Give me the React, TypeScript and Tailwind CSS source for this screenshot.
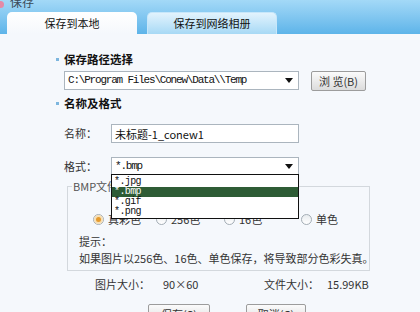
const cjk = "font-['Noto_Sans_CJK_SC','Noto_Sans',sans-serif]";
const mono = "font-['Liberation_Mono','Noto_Sans_CJK_SC',monospace] text-[11px] tracking-[-1.2px]";

function Arrow() {
  return (
    <svg width="8" height="5" viewBox="0 0 8 5" className="shrink-0">
      <path d="M0 0 L8 0 L4 5 Z" fill="#111" />
    </svg>
  );
}

function SectionTitle({ text }: { text: string }) {
  return (
    <div className="flex items-center h-[14px] -ml-[1px]">
      <span className="w-[3px] h-[3px] bg-[#7db6de] mr-[5px]" />
      <span className="font-bold text-[11.5px] leading-[14px] text-[#111]">{text}</span>
    </div>
  );
}

function Radio({ label, checked, width }: { label: string; checked?: boolean; width: string }) {
  return (
    <div className={`flex items-center gap-[4px] ${width}`}>
      <span className="w-[11px] h-[11px] rounded-full border border-[#a3adb5] bg-gradient-to-b from-[#e8ecef] to-white flex items-center justify-center">
        {checked && <span className="w-[5px] h-[5px] rounded-full bg-[#e59b2e] ring-2 ring-[#f7dfb5]" />}
      </span>
      <span className="text-[11px] leading-[14px] text-[#333]">{label}</span>
    </div>
  );
}

export default function App() {
  const formats = ["*.jpg", "*.bmp", "*.gif", "*.png"];
  return (
    <div className={`relative w-[420px] h-[312px] overflow-hidden bg-[#f5f8fc] text-[#222] ${cjk}`}>
      {/* header band with tabs */}
      <div className="h-[34px] bg-gradient-to-b from-[#a3d9f7] to-[#5db4e9]">
        <div className="h-[12px] flex items-end overflow-hidden">
          <span className="w-[4px] h-[7px] rounded-r-full bg-[#e58aa6] mb-[4px]" />
          <span className="ml-[6px] text-[12px] leading-[12px] text-[#3a4a58] -translate-y-[4px]">保存</span>
        </div>
        <div className="flex pl-[7px] gap-[10px]">
          <div className="w-[130px] h-[22px] rounded-t-[5px] bg-gradient-to-b from-white to-[#f5f8fc] flex items-center justify-center text-[11px] text-[#111]">
            保存到本地
          </div>
          <div className="w-[130px] h-[22px] rounded-t-[5px] bg-gradient-to-b from-[#e2f3fd] to-[#a7d9f5] border-t border-x border-[#c7e7fa] flex items-center justify-center text-[11px] text-[#111]">
            保存到网络相册
          </div>
        </div>
      </div>

      <div className="pl-[57px]">
        <div className="mt-[18px]">
          <SectionTitle text="保存路径选择" />
        </div>
        <div className="flex items-start gap-[12px] mt-[5px] pl-[7px]">
          <div className="w-[235px] h-[19px] bg-white border border-[#abb5be] flex items-center pl-[3px] pr-[5px]">
            <span className={`flex-1 ${mono} text-[#111]`}>C:\Program Files\Conew\Data\\Temp</span>
            <Arrow />
          </div>
          <button className="w-[55px] h-[20px] rounded-[2px] border border-[#9c9c9c] bg-gradient-to-b from-[#fbfbfb] to-[#dcdcdc] text-[11px] leading-[18px] text-[#333]">
            浏 览(B)
          </button>
        </div>

        <div className="mt-[5px]">
          <SectionTitle text="名称及格式" />
        </div>

        <div className="flex items-center mt-[14px] pl-[7px]">
          <span className="w-[47px] text-[11px] text-[#333]">名称：</span>
          <div className="w-[188px] h-[19px] bg-white border border-[#abb5be] flex items-center pl-[3px]">
            <span className="text-[11px] leading-[14px] text-[#111]">未标题-1_conew1</span>
          </div>
        </div>

        <div className="flex items-center mt-[14px] pl-[7px]">
          <span className="w-[47px] text-[11px] text-[#333]">格式：</span>
          <div className="w-[188px] h-[18px] bg-white border border-[#abb5be] flex items-center pl-[3px] pr-[5px]">
            <span className={`flex-1 ${mono} text-[#111]`}>*.bmp</span>
            <Arrow />
          </div>
        </div>

        {/* BMP group box */}
        <div className="relative ml-[10px] mt-[11px] w-[303px] h-[85px] border border-[#d3d8dd] pl-[11px]">
          <span className="absolute -top-[8px] left-[4px] px-[1px] bg-[#f5f8fc] text-[11px] leading-[14px] text-[#555]">BMP文件格式</span>
          <div className="flex pt-[25px] pl-[14px]">
            <Radio label="真彩色" checked width="w-[63px]" />
            <Radio label="256色" width="w-[68px]" />
            <Radio label="16色" width="w-[77px]" />
            <Radio label="单色" width="w-[50px]" />
          </div>
          <div className="mt-[8px] text-[11px] leading-[14px] text-[#333]">提示：</div>
          <div className="mt-[3px] text-[11px] leading-[14px] text-[#333] whitespace-nowrap">
            如果图片以256色、16色、单色保存，将导致部分色彩失真。
          </div>
        </div>

        <div className="flex items-center mt-[6px] h-[14px] text-[11px] text-[#333]">
          <span className="ml-[38px] w-[68px]">图片大小：</span>
          <span className="w-[101px]">90×60</span>
          <span className="w-[63px]">文件大小：</span>
          <span>15.99KB</span>
        </div>

        <div className="flex mt-[13px]">
          <button className="ml-[91px] w-[62px] h-[20px] rounded-[2px] border border-[#9c9c9c] bg-gradient-to-b from-[#fbfbfb] to-[#dcdcdc] text-[11px] leading-[18px] text-[#333]">
            保存(S)
          </button>
          <button className="ml-[36px] w-[60px] h-[20px] rounded-[2px] border border-[#9c9c9c] bg-gradient-to-b from-[#fbfbfb] to-[#dcdcdc] text-[11px] leading-[18px] text-[#333]">
            取消(C)
          </button>
        </div>
      </div>

      {/* open format dropdown */}
      <div className="absolute left-[111px] top-[174px] w-[188px] h-[45px] bg-white border border-[#111] overflow-hidden pt-[2px]">
        {formats.map((f) => (
          <div
            key={f}
            className={`h-[10px] pl-[2px] font-['Liberation_Mono',monospace] text-[10px] tracking-[-0.6px] leading-[10px] ${f === "*.bmp" ? "bg-[#2e5c35] text-white" : "text-[#111]"}`}
          >
            {f}
          </div>
        ))}
      </div>
    </div>
  );
}
